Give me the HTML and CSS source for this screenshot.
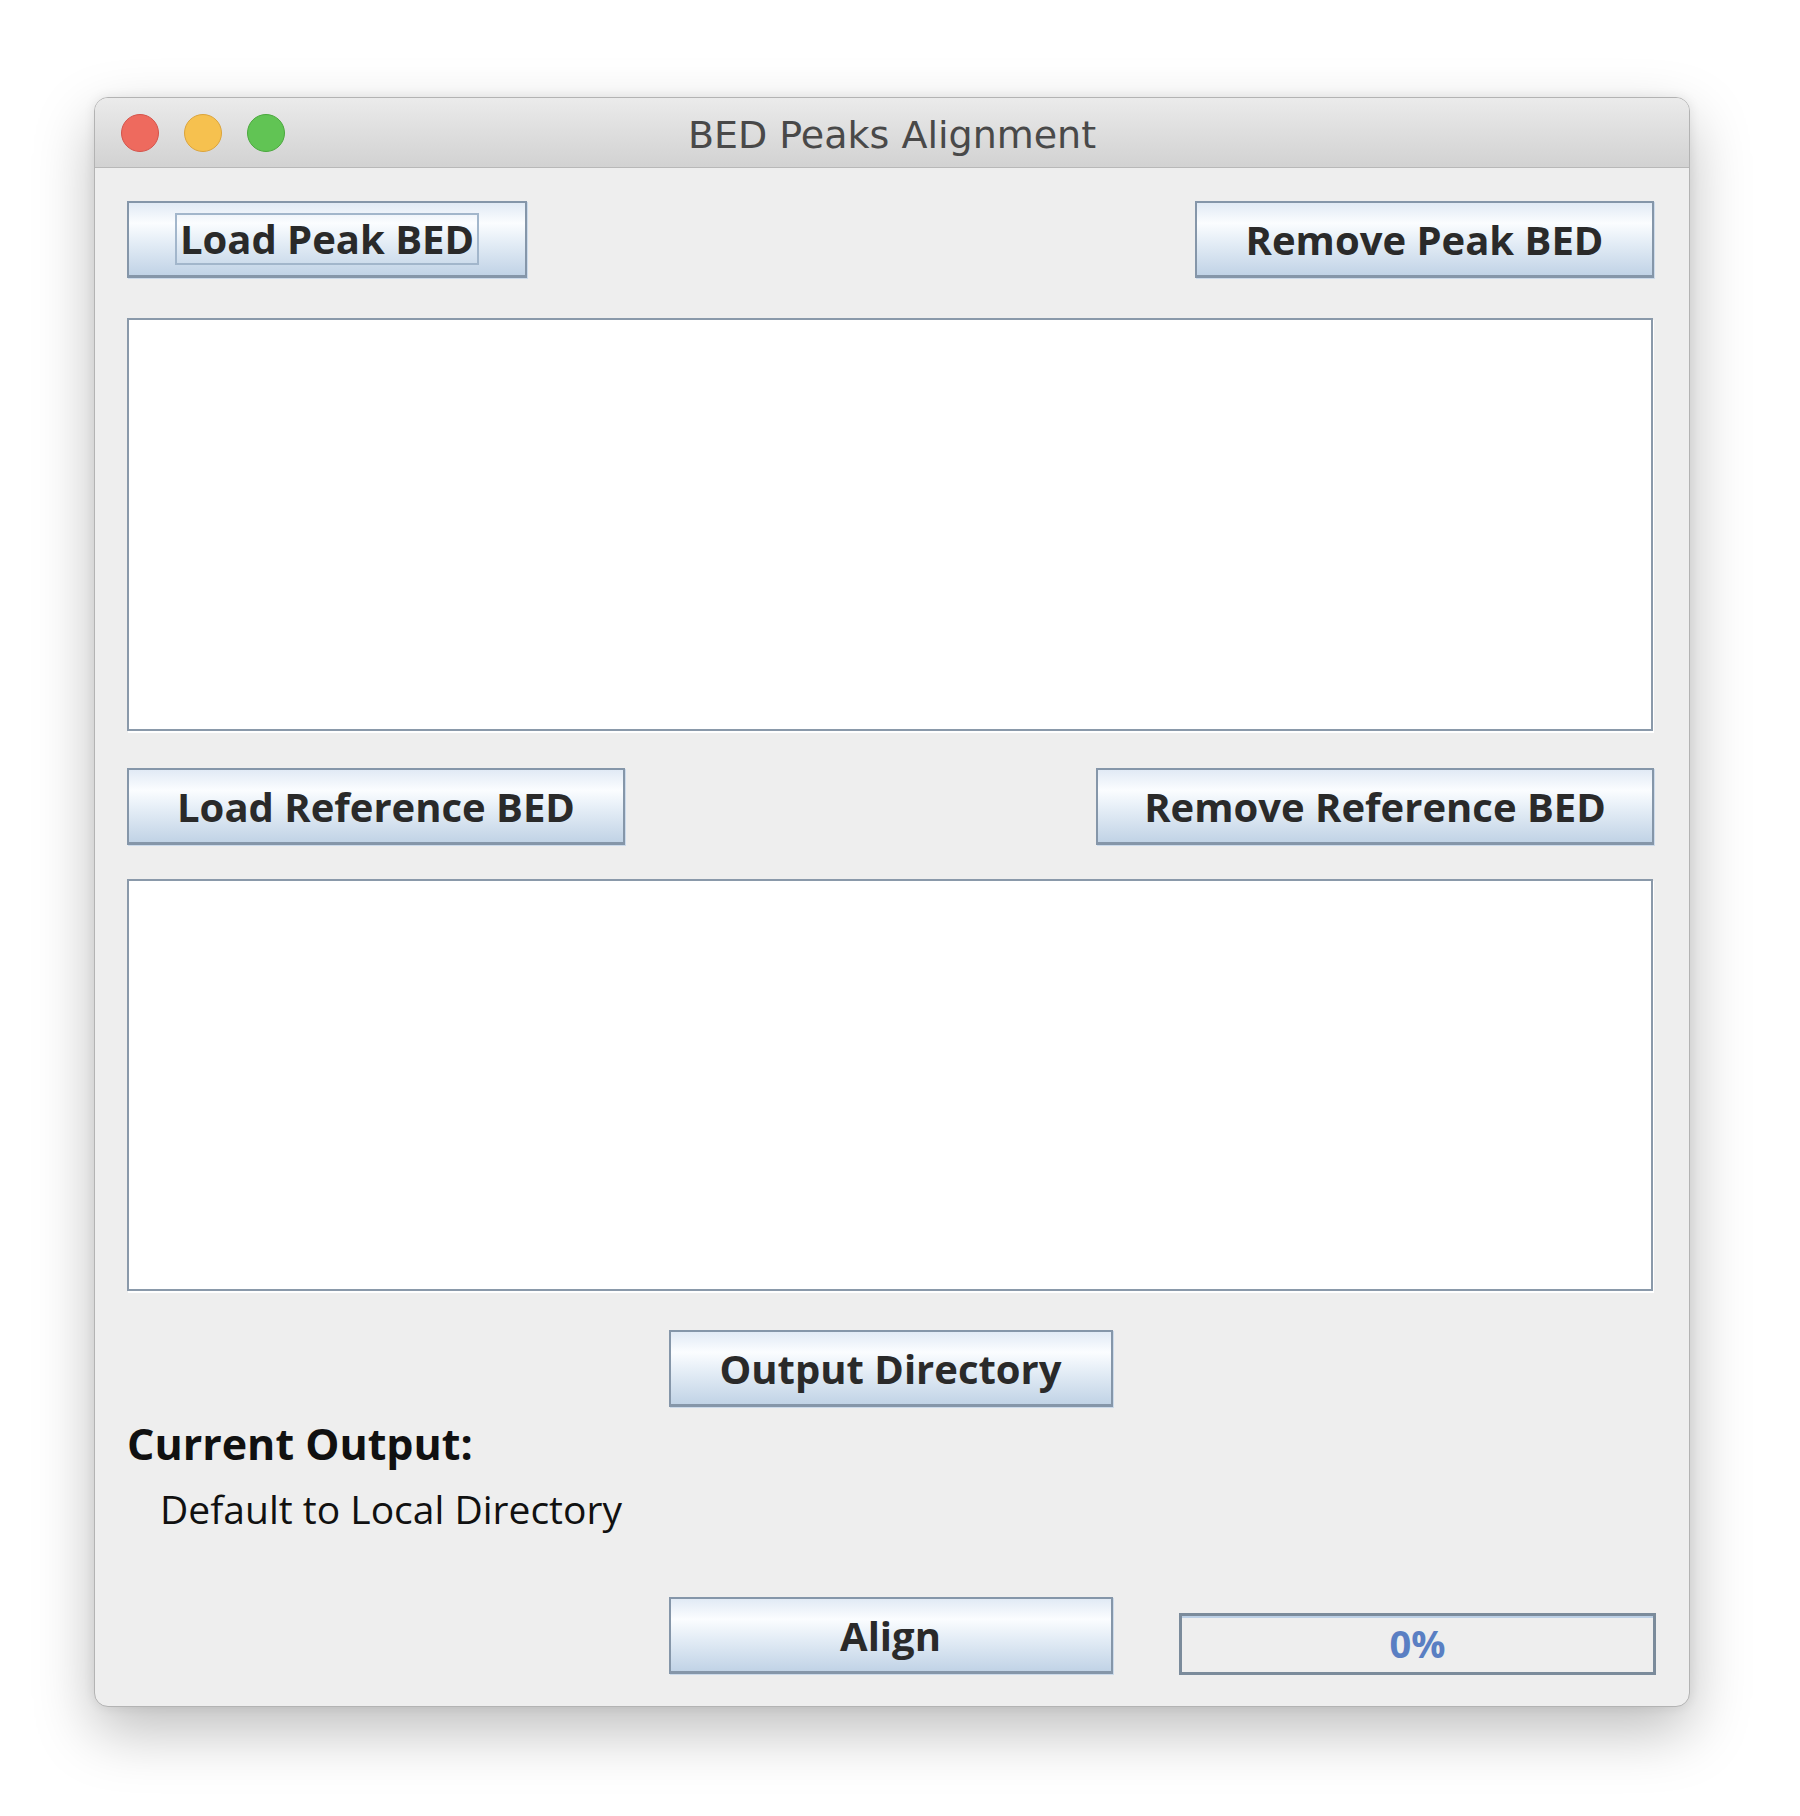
FILE: index.html
```html
<!DOCTYPE html>
<html lang="en">
<head>
<meta charset="utf-8">
<title>BED Peaks Alignment</title>
<link rel="stylesheet" href="styles.css">
</head>
<body>
<div class="window">
  <div class="titlebar">
    <div class="lights">
      <span class="light red"></span>
      <span class="light yellow"></span>
      <span class="light green"></span>
    </div>
    <div class="title">BED Peaks Alignment</div>
  </div>
  <div class="content">
    <div class="row">
      <button class="btn w-load-peak"><span class="focus">Load Peak BED</span></button>
      <button class="btn w-remove-peak">Remove Peak BED</button>
    </div>
    <div class="list list-first"></div>
    <div class="row row-second">
      <button class="btn w-load-ref">Load Reference BED</button>
      <button class="btn w-remove-ref">Remove Reference BED</button>
    </div>
    <div class="list list-second"></div>
    <div class="row-center">
      <button class="btn w-center">Output Directory</button>
    </div>
    <div class="out-label">Current Output:</div>
    <div class="out-value">Default to Local Directory</div>
    <div class="row-bottom">
      <div></div>
      <button class="btn w-center">Align</button>
      <div class="progress"><span>0%</span></div>
    </div>
  </div>
</div>
</body>
</html>
```

FILE: styles.css
```css
html, body {
  margin: 0;
  padding: 0;
  background: #ffffff;
}

body {
  width: 1800px;
  height: 1816px;
  overflow: hidden;
}

.window {
  box-sizing: border-box;
  margin: 97px 0 0 94px;
  width: 1596px;
  height: 1610px;
  background: #eeeeee;
  border: 1px solid #b3b3b3;
  border-radius: 14px;
  overflow: hidden;
  box-shadow: 0 24px 60px rgba(0, 0, 0, 0.26), 0 0 12px rgba(0, 0, 0, 0.08);
  display: flex;
  flex-direction: column;
}

.titlebar {
  box-sizing: border-box;
  height: 70px;
  flex: none;
  position: relative;
  display: flex;
  align-items: center;
  justify-content: center;
  background: linear-gradient(to bottom, #ebebeb 0%, #dedede 50%, #d2d2d2 100%);
  border-bottom: 1px solid #b8b8b8;
}

.lights {
  position: absolute;
  left: 26px;
  top: 16px;
  display: flex;
  gap: 25px;
}

.light {
  box-sizing: border-box;
  width: 38px;
  height: 38px;
  border-radius: 50%;
  display: block;
}

.red { background: #ee6a5e; border: 1px solid #d5534a; }
.yellow { background: #f6c14f; border: 1px solid #dca43a; }
.green { background: #61c454; border: 1px solid #4aa83d; }

.title {
  font-family: "DejaVu Sans", "Liberation Sans", sans-serif;
  font-size: 38px;
  color: #494949;
  line-height: 1;
  margin-top: 4px;
}

.content {
  flex: 1;
  display: flex;
  flex-direction: column;
  padding: 33px 35px 0 32px;
}

.row {
  display: flex;
  justify-content: space-between;
  align-items: center;
}

.row-second {
  margin-top: 37px;
}

.btn {
  box-sizing: border-box;
  height: 77px;
  padding: 0;
  margin: 0;
  display: flex;
  align-items: center;
  justify-content: center;
  font-family: "Open Sans", "Liberation Sans", sans-serif;
  font-weight: 700;
  font-size: 40px;
  color: #2a2a2a;
  background: linear-gradient(to bottom, #e1eaf5 0%, #fbfdff 28%, #e4edf6 55%, #c1d3e6 100%);
  border: 2px solid #8596a9;
  border-bottom-width: 3px;
  border-radius: 0;
  box-shadow: 1px 1px 0 #ccdaea;
}

.w-load-peak { width: 400px; }
.w-remove-peak { width: 459px; }
.w-load-ref { width: 498px; }
.w-remove-ref { width: 558px; }
.w-center { width: 444px; }

.focus {
  display: block;
  line-height: 48px;
  padding: 0 3px;
  border: 2px solid #a2b6cb;
}

.list {
  box-sizing: border-box;
  background: #ffffff;
  border: 2px solid #8a99aa;
  box-shadow: 1px 2px 0 #ffffff;
  margin-right: 1px;
}

.list-first {
  margin-top: 40px;
  height: 413px;
}

.list-second {
  margin-top: 34px;
  height: 412px;
}

.row-center {
  margin-top: 39px;
  display: flex;
  justify-content: center;
}

.out-label {
  margin-top: 11px;
  font-family: "Open Sans", "Liberation Sans", sans-serif;
  font-weight: 700;
  font-size: 43px;
  line-height: 52px;
  color: #111111;
}

.out-value {
  margin-top: 14px;
  padding-left: 33px;
  font-family: "Open Sans", "Liberation Sans", sans-serif;
  font-size: 39px;
  line-height: 50px;
  color: #111111;
}

.row-bottom {
  margin-top: 63px;
  display: grid;
  grid-template-columns: 1fr auto 1fr;
  align-items: end;
}

.progress {
  justify-self: end;
  box-sizing: border-box;
  width: 477px;
  height: 62px;
  margin-right: -2px;
  margin-bottom: -1px;
  border: 3px solid #7b8b9b;
  box-shadow: inset 0 2px 0 #bcd0e6;
  background: #eeeeee;
  display: flex;
  align-items: center;
  justify-content: center;
  font-family: "Open Sans", "Liberation Sans", sans-serif;
  font-weight: 700;
  font-size: 38px;
  line-height: 1;
  padding-bottom: 2px;
  color: #5a7fc3;
}
```
